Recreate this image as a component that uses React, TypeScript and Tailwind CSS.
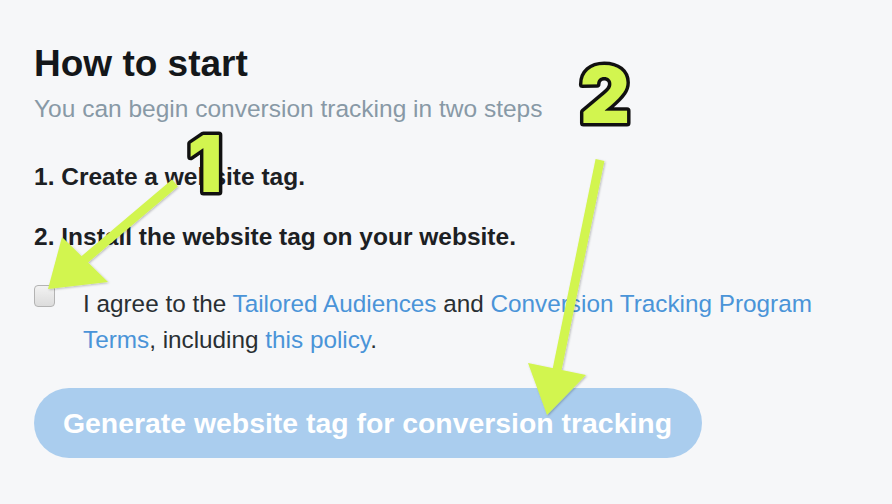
export default function App() {
  return (
    <div className="relative w-[892px] h-[504px] overflow-hidden bg-[#f6f7f9] font-['Liberation_Sans',Arial,sans-serif]">
      {/* Card content */}
      <div className="pl-[34px] pt-[46px]">
        <h1 className="text-[37px] leading-[36px] font-bold text-[#14171a]">How to start</h1>
        <p className="mt-[13px] text-[24.5px] leading-[28px] text-[#8899a6]">
          You can begin conversion tracking in two steps
        </p>
        <p className="mt-[40px] text-[24.5px] leading-[28px] font-bold text-[#1c2023]">1. Create a website tag.</p>
        <p className="mt-[32px] text-[24.5px] leading-[28px] font-bold text-[#1c2023]">
          2. Install the website tag on your website.
        </p>

        <label className="mt-[35px] flex items-start gap-[28px]">
          <span className="mt-[-1px] block h-[22px] w-[21px] shrink-0 rounded-[4px] border border-[#b3b3b3] bg-gradient-to-b from-[#f2f2f2] to-[#dcdcdc]" />
          <span className="w-[760px] text-[24.3px] leading-[36px] text-[#292f33]">
            I agree to the <a className="text-[#4a94d8]">Tailored Audiences</a> and{' '}
            <a className="text-[#4a94d8]">Conversion Tracking Program</a>{' '}
            <a className="text-[#4a94d8]">Terms</a>, including{' '}
            <a className="text-[#4a94d8]">this policy</a>.
          </span>
        </label>

        <button
          disabled
          className="mt-[30px] flex h-[70px] w-[668px] items-center rounded-full bg-[#aacdee] pl-[29px] text-[28.4px] font-bold text-white"
        >
          Generate website tag for conversion tracking
        </button>
      </div>

      {/* Annotations */}
      <svg
        className="pointer-events-none absolute inset-0"
        width="892"
        height="504"
        viewBox="0 0 892 504"
      >
        <defs>
          <filter id="sh" x="-10%" y="-10%" width="120%" height="120%">
            <feDropShadow dx="1" dy="1" stdDeviation="1" floodColor="#000" floodOpacity="0.25" />
          </filter>
        </defs>
        <g fill="#d2f54f" stroke="none" filter="url(#sh)">
          <line x1="175" y1="183" x2="84" y2="260" stroke="#d2f54f" strokeWidth="9" />
          <polygon points="62,237 108,282 48,289" />
          <line x1="600" y1="160" x2="557" y2="370" stroke="#d2f54f" strokeWidth="9" />
          <polygon points="528,363 586,375 547,415" />
        </g>
        <g
          fontFamily="Inter, 'Liberation Sans', sans-serif"
          fontWeight="900"
          fontSize="78"
          fill="#d2f54f"
          stroke="#111"
          strokeWidth="7"
          strokeLinejoin="round"
          paintOrder="stroke"
          textAnchor="middle"
        >
          <text x="205" y="192">1</text>
          <text x="605" y="123">2</text>
        </g>
      </svg>
    </div>
  )
}
